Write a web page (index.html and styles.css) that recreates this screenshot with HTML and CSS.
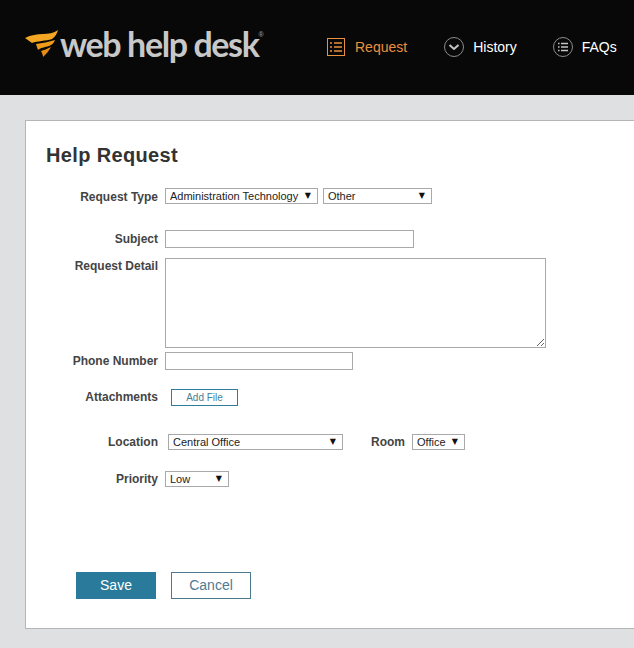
FILE: index.html
```html
<!DOCTYPE html>
<html lang="en">
<head>
    <meta charset="UTF-8">
    <meta name="viewport" content="width=device-width, initial-scale=1.0">
    <title>Help Request</title>
    <link rel="stylesheet" href="styles.css">
</head>
<body>
    <header class="topbar">
        <div class="logo">
            <svg class="logo-mark" width="36" height="32" viewBox="0 0 36 32">
                <path fill="#f5a623" d="M0 11 C6 8 12 7 18 7 C23 7 29 6 33 3 C32 7 30 10 27 12 C21 14 12 14 7 16 Z"/>
                <path fill="#f09a1a" d="M11 17 C17 16 24 15 30 13 C29 16 27 18 24 19 C20 20 15 21 13 23 Z"/>
                <path fill="#e88d14" d="M16 24 C19 23 22 22 26 20 C24 24 21 27 18 30 C18 28 17 26 16 24 Z"/>
            </svg>
            <span class="logo-text">web help desk</span><span class="logo-reg">®</span>
        </div>
        <nav class="nav">
            <a class="nav-item active" href="#">
                <svg width="18" height="18" viewBox="0 0 18 18" fill="none" stroke="#e8913f">
                    <rect x="0.5" y="0.5" width="17" height="17"/>
                    <path stroke-width="1.5" d="M3 5h2M7 5h8M3 9h2M7 9h8M3 13h2M7 13h8"/>
                </svg>
                Request
            </a>
            <a class="nav-item" href="#">
                <svg width="20" height="20" viewBox="0 0 20 20" fill="none" stroke="#8c8c8c">
                    <circle cx="10" cy="10" r="9.5"/>
                    <path stroke="#c4c4c4" stroke-width="2" d="M5.5 8l4.500 4 4.500-4"/>
                </svg>
                History
            </a>
            <a class="nav-item" href="#">
                <svg width="20" height="20" viewBox="0 0 20 20" fill="none" stroke="#8c8c8c">
                    <circle cx="10" cy="10" r="9.5"/>
                    <path stroke="#c4c4c4" stroke-width="1.6" d="M5 6.500h1.500M8 6.500h7M5 10h1.500M8 10h7M5 13.500h1.500M8 13.500h7"/>
                </svg>
                FAQs
            </a>
        </nav>
    </header>

    <main class="card">
        <h1 class="title">Help Request</h1>
        <form>
            <div class="row row-type">
                <label class="field-label">Request Type</label>
                <span class="select w-153"><select><option>Administration Technology</option></select></span>
                <span class="select w-109"><select><option>Other</option></select></span>
            </div>
            <div class="row row-subject">
                <label class="field-label">Subject</label>
                <input class="text-input w-249" type="text">
            </div>
            <div class="row row-detail">
                <label class="field-label">Request Detail</label>
                <textarea class="detail"></textarea>
            </div>
            <div class="row row-phone">
                <label class="field-label">Phone Number</label>
                <input class="text-input w-188" type="text">
            </div>
            <div class="row row-attach">
                <label class="field-label">Attachments</label>
                <button class="add-file" type="button">Add File</button>
            </div>
            <div class="row row-location">
                <label class="field-label">Location</label>
                <span class="select w-175 location"><select><option>Central Office</option></select></span>
                <label class="room-label">Room</label>
                <span class="select w-53"><select><option>Office</option></select></span>
            </div>
            <div class="row row-priority">
                <label class="field-label">Priority</label>
                <span class="select w-64"><select><option>Low</option></select></span>
            </div>
            <div class="actions">
                <button class="btn btn-save" type="button">Save</button>
                <button class="btn btn-cancel" type="button">Cancel</button>
            </div>
        </form>
    </main>
</body>
</html>
```

FILE: styles.css
```css
html, body {
    height: 100%;
}

body {
    margin: 0;
    overflow: hidden;
    background-color: #dfe0e1;
    font-family: "Liberation Sans", Arial, sans-serif;
    color: #333;
}

/* top bar */
.topbar {
    display: flex;
    align-items: center;
    height: 95px;
    padding-left: 25px;
    background-color: #080808;
}

.logo {
    display: flex;
    align-items: flex-start;
    flex: none;
    width: 302px;
    height: 40px;
    margin-top: -2px;
}

.logo-mark {
    flex: none;
}

.logo-text {
    margin: -1px 0 0 -1px;
    font-family: Lato, sans-serif;
    font-size: 34px;
    font-weight: 700;
    line-height: 36px;
    letter-spacing: -1.4px;
    color: #c8c8c8;
    white-space: nowrap;
}

.logo-reg {
    margin-top: 1px;
    font-size: 7px;
    line-height: 14px;
    color: #aaa;
}

.nav {
    display: flex;
    align-items: center;
    margin-top: -2px;
}

.nav-item {
    display: flex;
    align-items: center;
    gap: 9px;
    margin-right: 36px;
    font-size: 14px;
    color: #fff;
    text-decoration: none;
    white-space: nowrap;
}

.nav-item svg {
    flex: none;
}

.nav-item.active {
    gap: 10px;
    margin-right: 37px;
    color: #e8913f;
}

/* form card */
.card {
    height: 509px;
    margin: 25px -10px 0 25px;
    padding: 0 0 0 20px;
    box-sizing: border-box;
    border: 1px solid #b5b5b5;
    background-color: #fff;
}

.title {
    margin: 0;
    padding-top: 22px;
    font-size: 20px;
    line-height: 24px;
    font-weight: bold;
    letter-spacing: 0.35px;
    color: #333;
}

.row {
    display: flex;
    align-items: flex-start;
}

.field-label {
    flex: none;
    width: 112px;
    margin-right: 7px;
    font-size: 12px;
    font-weight: bold;
    line-height: 16px;
    text-align: right;
    color: #444;
}

.row-type { margin-top: 21px; }
.row-subject { margin-top: 25px; }
.row-detail { margin-top: 10px; }
.row-phone { margin-top: 4px; }
.row-attach { margin-top: 19px; }
.row-location { margin-top: 28px; }
.row-priority { margin-top: 21px; }

.row-type .field-label,
.row-subject .field-label,
.row-phone .field-label {
    padding-top: 1px;
}

.select {
    position: relative;
    display: block;
    flex: none;
    height: 16px;
    margin-right: 5px;
}

.select::after {
    content: "▼";
    position: absolute;
    top: 2px;
    right: 7px;
    font-family: "DejaVu Sans", sans-serif;
    font-size: 8px;
    line-height: 12px;
    color: #111;
    pointer-events: none;
}

.select select {
    display: block;
    width: 100%;
    height: 16px;
    padding: 0 0 0 4px;
    box-sizing: border-box;
    border: 1px solid #a9a9a9;
    border-radius: 0;
    appearance: none;
    background-color: #fff;
    font-family: "Liberation Sans", Arial, sans-serif;
    font-size: 11px;
    line-height: 14px;
    color: #222;
}

.w-153 { width: 153px; }
.w-109 { width: 109px; }
.w-175 { width: 175px; }
.w-53 { width: 53px; }
.w-64 { width: 64px; }

.location {
    margin-left: 3px;
}

.room-label {
    margin: 0 7px 0 23px;
    font-size: 12px;
    font-weight: bold;
    line-height: 16px;
    color: #444;
}

.text-input {
    display: block;
    height: 18px;
    padding: 0 4px;
    box-sizing: border-box;
    border: 1px solid #a9a9a9;
    background-color: #fff;
}

.w-249 { width: 249px; }
.w-188 { width: 188px; }

.detail {
    display: block;
    width: 381px;
    height: 90px;
    padding: 2px;
    box-sizing: border-box;
    border: 1px solid #a9a9a9;
    background-color: #fff;
}

.add-file {
    width: 67px;
    height: 17px;
    margin-left: 6px;
    padding: 0;
    box-sizing: border-box;
    border: 1px solid #2d7d9a;
    background-color: #fff;
    font-family: "Liberation Sans", Arial, sans-serif;
    font-size: 10px;
    color: #4a7f96;
}

.actions {
    display: flex;
    gap: 15px;
    margin: 85px 0 0 30px;
}

.btn {
    width: 80px;
    height: 27px;
    padding: 0 0 2px;
    box-sizing: border-box;
    font-family: "Liberation Sans", Arial, sans-serif;
    font-size: 14px;
}

.btn-save {
    border: 1px solid #2a7b9b;
    background-color: #2a7b9b;
    color: #fff;
}

.btn-cancel {
    border: 1px solid #4a7a8c;
    background-color: #fff;
    color: #4f7b90;
}
```
